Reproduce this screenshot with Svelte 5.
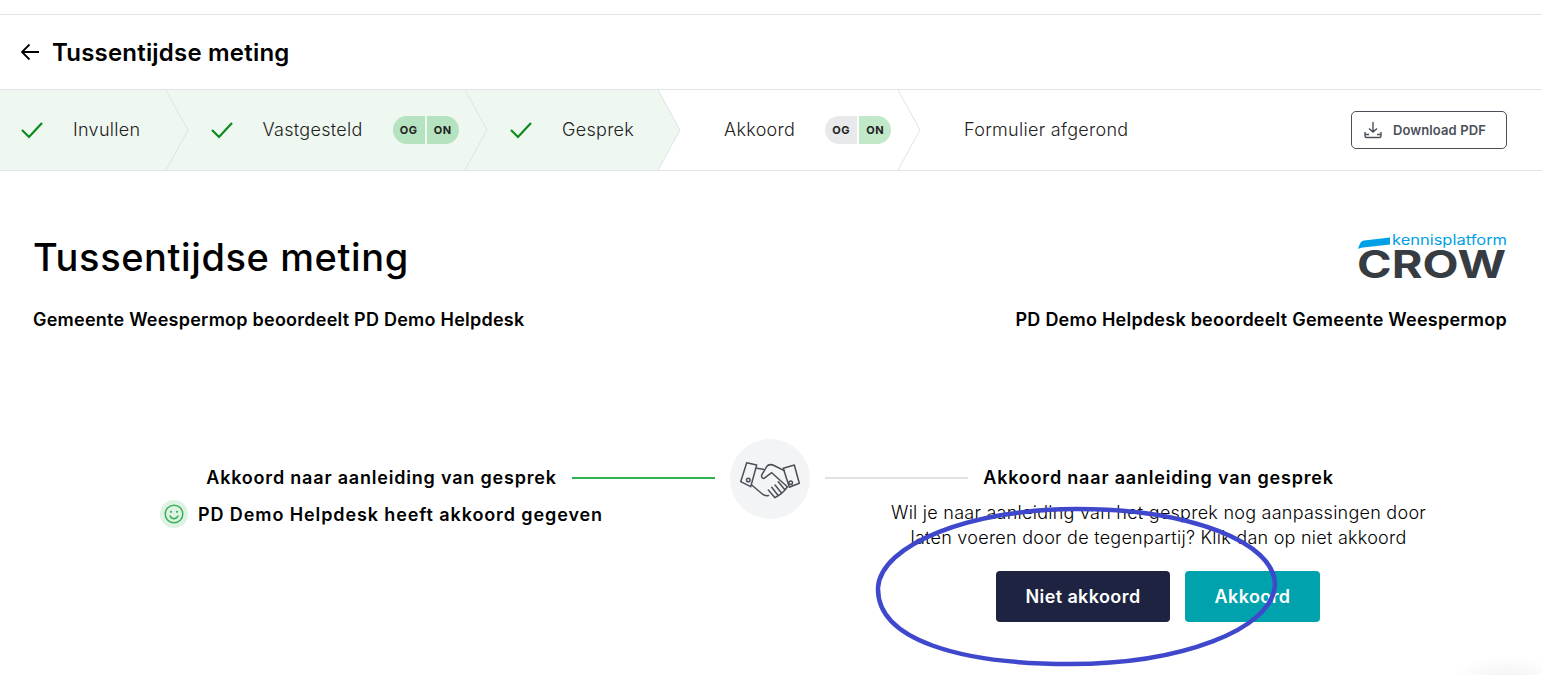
<script>
  const steps = [
    { label: 'Invullen', done: true, width: 165.5 },
    { label: 'Vastgesteld', done: true, pill: ['done', 'done'], width: 299.5 },
    { label: 'Gesprek', done: true, width: 193 },
    { label: 'Akkoord', done: false, pill: ['open', 'done'], width: 240 },
    { label: 'Formulier afgerond', done: false, width: 0 }
  ];
</script>

<div class="page">
  <header class="topbar">
    <svg class="back" viewBox="0 0 20 18" aria-hidden="true">
      <path d="M19 9H2M9.5 1.5 2 9l7.5 7.5" />
    </svg>
    <h2>Tussentijdse meting</h2>
  </header>

  <nav class="stepper">
    {#each steps as step, i}
      <div class="step" class:done={step.done} class:first={i === 0} style:width={step.width ? step.width + 'px' : null}>
        {#if step.done}
          <svg class="check" viewBox="0 0 24 18" aria-hidden="true">
            <path d="M2 9l7 7L22 2" />
          </svg>
        {/if}
        <span class="label">{step.label}</span>
        {#if step.pill}
          <span class="pill">
            <span class={step.pill[0]}>OG</span>
            <span class={step.pill[1]}>ON</span>
          </span>
        {/if}
        {#if step.width}
          <svg class="tip" viewBox="0 0 23 80" aria-hidden="true">
            <path class="fill" class:green={step.done} d="M0 0 22 40 0 80Z" />
            <path class="edge" d="M0 0 22 40 0 80" />
          </svg>
        {/if}
      </div>
    {/each}
    <button class="download">
      <svg viewBox="0 0 18 18" aria-hidden="true">
        <path d="M9 1v10M5 7.500 9 11l4-3.500M1 11v4c0 1 .6 1.500 1.500 1.500h13c.9 0 1.500-.5 1.500-1.500v-4M1 13.500h4M13 13.500h4" />
      </svg>
      Download PDF
    </button>
  </nav>

  <main class="content">
    <section class="intro">
      <div class="title-row">
        <h1>Tussentijdse meting</h1>
        <svg class="logo" viewBox="0 0 150 46" aria-label="Kennisplatform CROW">
          <path class="swoosh" d="M1 15 C2.500 10 4 7 7 6.500 L33 3.500 L33 10.500 L6 13.500 C4 13.800 2.500 14.300 1 15Z" />
          <text class="kennis" x="35" y="11" textLength="115" lengthAdjust="spacingAndGlyphs">kennisplatform</text>
          <text class="crow" x="0" y="44" textLength="149" lengthAdjust="spacingAndGlyphs">CROW</text>
        </svg>
      </div>
      <div class="sub-row">
        <p>Gemeente Weespermop beoordeelt PD Demo Helpdesk</p>
        <p>PD Demo Helpdesk beoordeelt Gemeente Weespermop</p>
      </div>
    </section>

    <section class="agreement">
      <div class="side left">
        <span></span>
        <h3>Akkoord naar aanleiding van gesprek</h3>
        <span class="line green"></span>
        <div class="status">
          <span class="smiley">
            <svg viewBox="0 0 20 20" aria-hidden="true">
              <circle cx="10" cy="10" r="8.800" />
              <path d="M5.800 11.500c1 2.300 2.500 3.300 4.200 3.300s3.200-1 4.200-3.300" />
              <circle class="eye" cx="7" cy="7.800" r="1.100" />
              <circle class="eye" cx="13" cy="7.800" r="1.100" />
            </svg>
          </span>
          PD Demo Helpdesk heeft akkoord gegeven
        </div>
      </div>

      <div class="handshake">
        <svg viewBox="0 0 80 80" aria-hidden="true">
          <path d="M16.700 23.700 26.700 26 20.700 47.700 10.700 42.700Z" />
          <path d="M53.300 29.300 64.300 26 69.300 44.300 59.300 48.300Z" />
          <circle cx="18.300" cy="41" r="1.800" />
          <circle cx="60.700" cy="43.700" r="1.800" />
          <path d="M26.700 29.300 33.300 30.300 M54.300 31.700 45 27 C41 25 38 25.500 36.700 27.700 L31.700 36 C31 38 32.500 40 34 39.300 L41.700 33.700 L57.300 47.700" />
          <path d="M21.700 46 32 54.700 C34 56.500 36 57 38.500 56.500" />
          <path d="M38.300 51 45 58.700 48.300 56.700 41.700 48.300 M48.300 56.700 51.700 54.300 45 46 M51.700 54.300 55 51 48.300 42.700 M55 51 57.300 47.700" />
        </svg>
      </div>

      <div class="side right">
        <span class="line"></span>
        <h3>Akkoord naar aanleiding van gesprek</h3>
        <span></span>
        <div class="answer">
          <p>Wil je naar aanleiding van het gesprek nog aanpassingen door<br />laten voeren door de tegenpartij? Klik dan op niet akkoord</p>
          <div class="buttons">
            <button class="btn dark">Niet akkoord</button>
            <button class="btn teal">Akkoord</button>
          </div>
        </div>
      </div>
    </section>
  </main>

  <!-- hand drawn marking on top of the screenshot -->
  <svg class="marking" viewBox="0 0 1542 675" aria-hidden="true">
    <path d="M1076 509C1190 509 1275 542 1275 585 1272 630 1180 664 1070 664 960 664 877 640 878 588 880 545 970 509 1076 509Z" />
  </svg>
  <div class="corner-shade"></div>
</div>

<style>
  :global(body) {
    margin: 0;
    background: #fff;
    font-family: Inter, "Liberation Sans", sans-serif;
    color: #000;
    overflow: hidden;
  }

  .page {
    position: relative;
    height: 675px;
    padding-top: 14px;
    box-sizing: border-box;
    overflow: hidden;
  }

  .topbar {
    display: flex;
    align-items: center;
    gap: 12px;
    height: 75px;
    padding-left: 20px;
    box-sizing: border-box;
    border-top: 1px solid #e2e4e8;
  }

  .back {
    width: 20px;
    height: 18px;
    fill: none;
    stroke: #000;
    stroke-width: 1.800;
  }

  h2 {
    margin: 0;
    font-size: 24px;
    font-weight: 600;
    letter-spacing: 0.2px;
  }

  .stepper {
    display: flex;
    align-items: center;
    height: 82px;
    box-sizing: border-box;
    border-top: 1px solid #dfe2e6;
    border-bottom: 1px solid #dfe2e6;
  }

  .step {
    position: relative;
    display: flex;
    align-items: center;
    height: 100%;
    flex-shrink: 0;
    padding-left: 66px;
    box-sizing: border-box;
    font-size: 18px;
    font-weight: 300;
    color: #222;
    letter-spacing: 0.3px;
  }

  .label {
    margin-top: -1px;
  }

  .step.done {
    background: #eef7f0;
    padding-left: 44px;
  }

  .step.first {
    padding-left: 20px;
  }

  .check {
    width: 24px;
    height: 18px;
    margin-right: 29px;
    fill: none;
    stroke: #0a8a1a;
    stroke-width: 2.200;
  }

  .pill {
    display: flex;
    gap: 2px;
    margin-left: 30px;
    height: 28px;
    border-radius: 14px;
    overflow: hidden;
    font-size: 11px;
    font-weight: 700;
    letter-spacing: 0.5px;
    color: #222;
  }

  .pill span {
    display: flex;
    align-items: center;
    justify-content: center;
    width: 32px;
  }

  .pill .done {
    background: #b5e2bf;
  }

  .pill .open {
    background: #e8e9eb;
  }

  .pill .open + .done {
    background: #c2e8ca;
  }

  .tip {
    position: absolute;
    top: 0;
    left: 100%;
    width: 23px;
    height: 80px;
    z-index: 1;
  }

  .tip .fill {
    fill: #fff;
  }

  .tip .fill.green {
    fill: #eef7f0;
  }

  .tip .edge {
    fill: none;
    stroke: #dfe2e6;
    stroke-width: 1;
  }

  .download {
    display: flex;
    align-items: center;
    gap: 11px;
    width: 156px;
    height: 38px;
    margin-left: auto;
    margin-right: 35px;
    padding: 0 0 0 12px;
    box-sizing: border-box;
    background: #fff;
    border: 1px solid #4b5058;
    border-radius: 5px;
    font: 600 13px Inter, sans-serif;
    letter-spacing: 0.1px;
    color: #4b5058;
  }

  .download svg {
    width: 18px;
    height: 18px;
    fill: none;
    stroke: #4b5058;
    stroke-width: 1.400;
  }

  .content {
    padding: 0 35px 0 33px;
  }

  .title-row {
    display: flex;
    justify-content: space-between;
    align-items: flex-start;
    padding-top: 63px;
  }

  h1 {
    margin: 0;
    font-size: 38px;
    line-height: 46px;
    font-weight: 500;
    letter-spacing: 0.6px;
  }

  .logo {
    width: 150px;
    height: 46px;
    overflow: visible;
  }

  .swoosh {
    fill: #00a0e6;
  }

  .kennis {
    fill: #00a0e6;
    font: 400 14px Inter, sans-serif;
  }

  .crow {
    fill: #373c42;
    font: 700 38px Inter, sans-serif;
  }

  .sub-row {
    display: flex;
    justify-content: space-between;
    margin-top: 29px;
  }

  .sub-row p {
    margin: 0;
    font-size: 18px;
    line-height: 22px;
    font-weight: 600;
    letter-spacing: 0.24px;
  }

  .agreement {
    display: grid;
    grid-template-columns: 1fr 80px 1fr;
    margin-top: 108px;
  }

  .side {
    display: grid;
    align-content: start;
    align-items: center;
    grid-template-columns: 1fr auto 1fr;
    padding-top: 26px;
  }

  .side h3 {
    margin: 0;
    font-size: 18px;
    line-height: 26px;
    font-weight: 600;
    letter-spacing: 0.8px;
    white-space: nowrap;
  }

  .line {
    height: 2px;
    margin: 0 15px;
    background: #dfe1e5;
  }

  .line.green {
    background: #2fb350;
  }

  .status,
  .answer {
    grid-column: 1 / -1;
    text-align: center;
  }

  .status {
    display: flex;
    align-items: center;
    justify-content: center;
    gap: 10px;
    margin-top: 9px;
    font-size: 18px;
    font-weight: 600;
    letter-spacing: 0.9px;
  }

  .smiley {
    display: flex;
    align-items: center;
    justify-content: center;
    width: 28px;
    height: 28px;
    border-radius: 50%;
    background: #dff2e4;
  }

  .smiley svg {
    width: 20px;
    height: 20px;
    fill: none;
    stroke: #35b255;
    stroke-width: 1.500;
  }

  .smiley .eye {
    fill: #35b255;
    stroke: none;
  }

  .answer p {
    margin: 9px 0 0;
    font-size: 18px;
    line-height: 25px;
    font-weight: 300;
    letter-spacing: 0.25px;
  }

  .buttons {
    display: flex;
    justify-content: center;
    gap: 15px;
    margin-top: 21px;
    padding-right: 1px;
  }

  .btn {
    height: 51px;
    border: 0;
    border-radius: 4px;
    color: #fff;
    font: 600 18px Inter, sans-serif;
    letter-spacing: 0.4px;
  }

  .dark {
    width: 174px;
    background: #1d2340;
  }

  .teal {
    width: 135px;
    background: #00a3ad;
  }

  .handshake {
    width: 80px;
    height: 80px;
    border-radius: 50%;
    background: #f3f4f6;
  }

  .handshake svg {
    width: 80px;
    height: 80px;
    fill: none;
    stroke: #4b5058;
    stroke-width: 1.500;
    stroke-linejoin: round;
    stroke-linecap: round;
  }

  .marking {
    position: absolute;
    inset: 0;
    width: 1542px;
    height: 675px;
    fill: none;
    stroke: #3f48cc;
    stroke-width: 4.500;
    pointer-events: none;
  }

  .corner-shade {
    position: absolute;
    right: -20px;
    bottom: -30px;
    width: 110px;
    height: 50px;
    background: radial-gradient(closest-side, #f2f2f2, #fff0);
  }
</style>
